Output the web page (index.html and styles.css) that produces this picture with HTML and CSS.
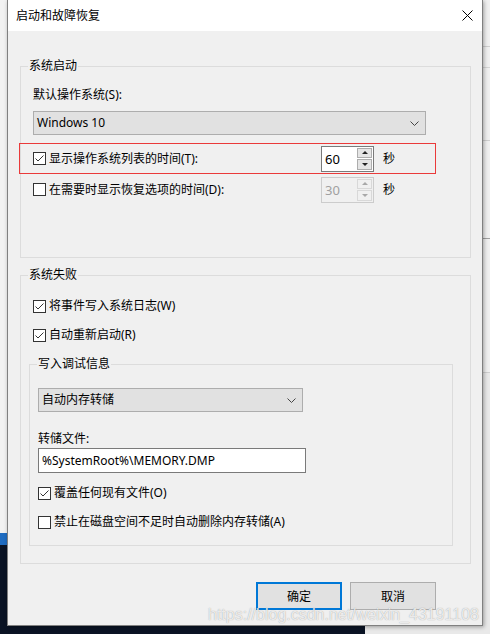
FILE: index.html
```html
<!DOCTYPE html>
<html lang="zh-CN">
<head>
    <meta charset="UTF-8">
    <meta name="viewport" content="width=device-width, initial-scale=1.0">
    <title>启动和故障恢复</title>
    <link rel="stylesheet" href="styles.css">
</head>
<body>

    <div class="screen">
        <div class="dialog">
            <div class="titlebar">
                <span class="title">启动和故障恢复</span>
                <svg class="close" width="11" height="11" viewBox="0 0 11 11">
                    <path d="M0.5 0.5 L10.5 10.5 M10.5 0.5 L0.5 10.5" stroke="#000" stroke-width="1" fill="none"/>
                </svg>
            </div>

            <div class="content">
                <div class="group startup">
                    <div class="group-title">系统启动</div>
                    <div class="label first">默认操作系统(S):</div>
                    <div class="combo wide">
                        <span>Windows 10</span>
                        <svg width="9" height="5" viewBox="0 0 9 5"><path d="M0.5 0.5 L4.5 4.5 L8.5 0.5" stroke="#444" fill="none"/></svg>
                    </div>

                    <div class="row marked">
                        <span class="check on"><svg width="11" height="11" viewBox="0 0 11 11"><path d="M1.5 5.5 L4 8 L9.5 2.5" stroke="#333" fill="none"/></svg></span>
                        <span class="row-text">显示操作系统列表的时间(T):</span>
                        <div class="spin">
                            <span class="spin-field">60</span>
                            <span class="spin-btns"><span class="up"></span><span class="down"></span></span>
                        </div>
                        <span class="unit">秒</span>
                    </div>

                    <div class="row plain">
                        <span class="check"></span>
                        <span class="row-text">在需要时显示恢复选项的时间(D):</span>
                        <div class="spin off">
                            <span class="spin-field">30</span>
                            <span class="spin-btns"><span class="up"></span><span class="down"></span></span>
                        </div>
                        <span class="unit">秒</span>
                    </div>
                </div>

                <div class="group failure">
                    <div class="group-title">系统失败</div>
                    <div class="option first">
                        <span class="check on"><svg width="11" height="11" viewBox="0 0 11 11"><path d="M1.5 5.5 L4 8 L9.5 2.5" stroke="#333" fill="none"/></svg></span>
                        <span>将事件写入系统日志(W)</span>
                    </div>
                    <div class="option">
                        <span class="check on"><svg width="11" height="11" viewBox="0 0 11 11"><path d="M1.5 5.5 L4 8 L9.5 2.5" stroke="#333" fill="none"/></svg></span>
                        <span>自动重新启动(R)</span>
                    </div>

                    <div class="group debug">
                        <div class="group-title">写入调试信息</div>
                        <div class="combo narrow">
                            <span>自动内存转储</span>
                            <svg width="9" height="5" viewBox="0 0 9 5"><path d="M0.5 0.5 L4.5 4.5 L8.5 0.5" stroke="#444" fill="none"/></svg>
                        </div>
                        <div class="label dump">转储文件:</div>
                        <div class="edit">%SystemRoot%\MEMORY.DMP</div>
                        <div class="option overwrite">
                            <span class="check on"><svg width="11" height="11" viewBox="0 0 11 11"><path d="M1.5 5.5 L4 8 L9.5 2.5" stroke="#333" fill="none"/></svg></span>
                            <span>覆盖任何现有文件(O)</span>
                        </div>
                        <div class="option">
                            <span class="check"></span>
                            <span>禁止在磁盘空间不足时自动删除内存转储(A)</span>
                        </div>
                    </div>
                </div>

                <div class="buttons">
                    <button class="btn default">确定</button>
                    <button class="btn">取消</button>
                </div>
            </div>
        </div>

        <div class="watermark">https://blog.csdn.net/weixin_43191108</div>
    </div>

</body>
</html>
```

FILE: styles.css
```css
body {
    margin: 0;
    background-color: #0a1324;
    font-family: "Noto Sans", "Noto Sans CJK SC", sans-serif;
    font-size: 12px;
    line-height: 16px;
    color: #000;
}
.screen {
    position: relative;
    width: 490px;
    height: 634px;
    overflow: hidden;
    background:
        linear-gradient(to bottom, #f2f2f2 0 533px, #1f6cc1 533px 545px, #0a1324 545px) 0 0 / 7px 634px no-repeat,
        linear-gradient(to bottom, #f0f0f0 0 46px, #cfcfcf 46px 47px, #f0f0f0 47px 67px, #d5d5d5 67px 68px,
            #f0f0f0 68px 140px, #cfcfcf 140px 141px, #f0f0f0 141px 238px, #a0a0a0 238px 239px,
            #f0f0f0 239px 372px, #cfcfcf 372px 373px, #e9e9e9 373px) 365px 0 / 125px 634px no-repeat,
        #0a1324;
}
.dialog {
    margin-left: 7px;
    width: 476px;
    height: 626px;
    box-sizing: border-box;
    border: 1px solid #808080;
    border-top: none;
    background-color: #f0f0f0;
    box-shadow: 1px 1px 4px rgba(0,0,0,0.35);
}
.titlebar {
    height: 31px;
    background: #fff;
    display: flex;
    align-items: center;
    justify-content: space-between;
    padding: 0 9px 0 8px;
}
.titlebar .title {
    line-height: 31px;
}
.close {
    margin-top: -1px;
}
.content {
    padding-top: 35px;
}

/* group boxes */
.group {
    border: 1px solid #dcdcdc;
    box-sizing: border-box;
}
.group-title {
    width: fit-content;
    margin: -9px 0 0 -5px;
    padding: 0 1px;
    background: #f0f0f0;
}
.startup {
    margin-left: 12px;
    width: 451px;
    padding: 0 0 54px 12px;
}
.failure {
    margin: 17px 0 0 12px;
    width: 451px;
    padding: 0 0 17px 12px;
}
.debug {
    margin: 21px 0 0 -4px;
    width: 424px;
    padding: 0 0 15px 8px;
}
.debug .group-title {
    margin-left: -1px;
}

.label.first {
    margin-top: 13px;
}
.label.dump {
    margin-top: 19px;
}

/* combo boxes */
.combo {
    display: flex;
    align-items: center;
    justify-content: space-between;
    height: 24px;
    box-sizing: border-box;
    border: 1px solid #adadad;
    background: #e1e1e1;
    padding: 0 6px 0 3px;
}
.combo.wide {
    width: 393px;
    margin-top: 8px;
}
.combo.narrow {
    width: 265px;
    margin-top: 16px;
}

.edit {
    width: 268px;
    height: 25px;
    box-sizing: border-box;
    margin-top: 1px;
    border: 1px solid #7a7a7a;
    background: #fff;
    padding: 0 3px;
    line-height: 23px;
}

/* check boxes */
.check {
    width: 13px;
    height: 13px;
    box-sizing: border-box;
    border: 1px solid #333;
    background: #fff;
    display: flex;
    align-items: center;
    justify-content: center;
    flex-shrink: 0;
}
.option {
    display: flex;
    align-items: center;
    gap: 3px;
    height: 16px;
}
.option.first {
    margin-top: 15px;
}
.option + .option {
    margin-top: 13px;
}
.option.overwrite {
    margin-top: 12px;
}

/* timeout rows */
.row {
    display: flex;
    align-items: center;
    gap: 3px;
    margin-left: -14px;
    width: 417px;
    box-sizing: border-box;
    border: 1px solid transparent;
    padding: 0 0 0 13px;
}
.row.marked {
    height: 31px;
    margin-top: 8px;
    border: 1px solid #ea3a3a;
}
.row.plain {
    height: 27px;
    margin-top: 2px;
}
.row-text {
    width: 269px;
}
.spin {
    display: flex;
    width: 53px;
    height: 26px;
    box-sizing: border-box;
    border: 1px solid #7a7a7a;
    background: #fff;
    padding: 1px;
}
.spin-field {
    flex: 1;
    padding-left: 2px;
    line-height: 22px;
    font-size: 13px;
}
.spin-btns {
    display: flex;
    flex-direction: column;
    gap: 1px;
    width: 15px;
}
.spin-btns span {
    flex: 1;
    border: 1px solid #adadad;
    background: #e5e5e5;
    display: flex;
    align-items: center;
    justify-content: center;
}
.spin-btns .up::after,
.spin-btns .down::after {
    content: "";
    border-left: 3px solid transparent;
    border-right: 3px solid transparent;
}
.spin-btns .up::after {
    border-bottom: 3px solid #222;
}
.spin-btns .down::after {
    border-top: 3px solid #222;
}
.spin.off {
    border-color: #cccccc;
    background: #f0f0f0;
    color: #a0a0a0;
}
.spin.off .spin-btns span {
    border-color: #d8d8d8;
    background: #f0f0f0;
}
.spin.off .up::after {
    border-bottom-color: #a8a8a8;
}
.spin.off .down::after {
    border-top-color: #a8a8a8;
}
.unit {
    margin-left: 6px;
}

/* buttons */
.buttons {
    display: flex;
    justify-content: flex-end;
    gap: 8px;
    margin: 18px 46px 0 0;
}
.btn {
    width: 86px;
    height: 28px;
    border: 1px solid #adadad;
    background: #e1e1e1;
    font-family: "Noto Sans", "Noto Sans CJK SC", sans-serif;
    font-size: 12px;
    color: #000;
    padding: 0;
}
.btn.default {
    border: 2px solid #0078d7;
}

.watermark {
    position: absolute;
    left: 208px;
    top: 606px;
    font-family: "Liberation Sans", Arial, sans-serif;
    font-size: 16px;
    line-height: 18px;
    color: rgba(255,255,255,0.8);
    text-shadow: 0 0 1px rgba(110,110,110,0.7);
    white-space: nowrap;
}
```
